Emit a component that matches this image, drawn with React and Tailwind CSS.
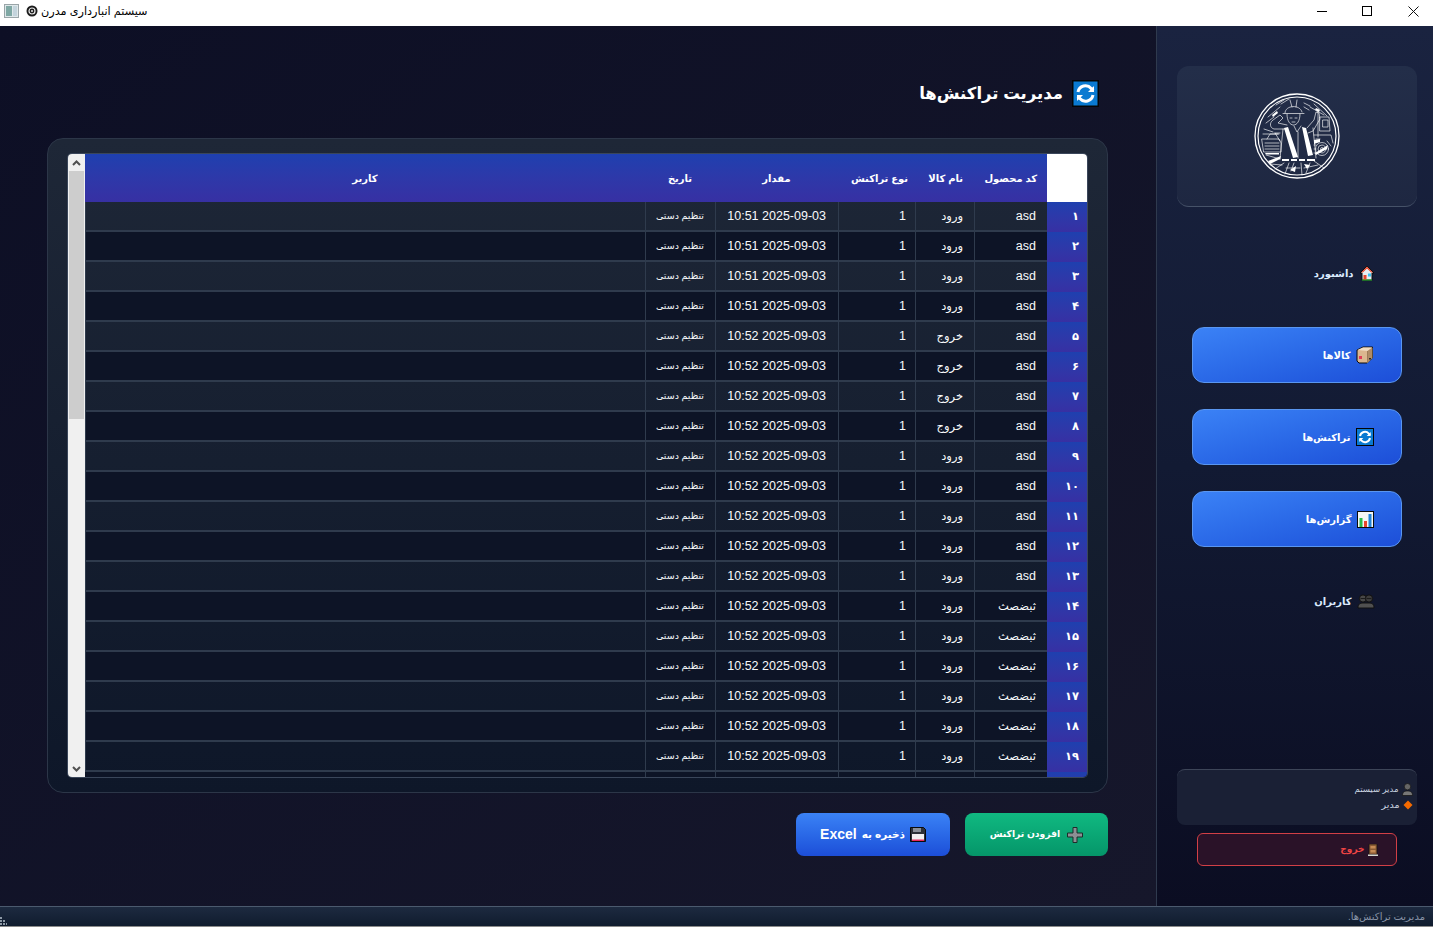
import React from "react";

const FONT = { fontFamily: '"Liberation Sans", "DejaVu Sans", sans-serif' };

function Refresh({ size = 18 }) {
  return (
    <svg width={size} height={size} viewBox="0 0 27 27" className="shrink-0">
      <rect x="0.75" y="0.75" width="25.5" height="25.5" fill="#0a7ad1" stroke="#050505" strokeWidth="1.5" />
      <path d="M6 12a7.6 7.6 0 0 1 13.2-3.6l2 2.1" fill="none" stroke="#fff" strokeWidth="3" />
      <path d="M22 6v6h-6z" fill="#fff" />
      <path d="M21 15a7.6 7.6 0 0 1-13.2 3.6l-2-2.1" fill="none" stroke="#fff" strokeWidth="3" />
      <path d="M5 21v-6h6z" fill="#fff" />
    </svg>
  );
}

function House() {
  return (
    <svg width="16" height="16" viewBox="0 0 16 16" className="shrink-0">
      <path d="M8 1 1 8h2v7h10V8h2z" fill="#e9eef2" stroke="#0a0a0a" />
      <path d="M8 1.6 2.2 7.5h1.6L8 3.6l4.2 3.9h1.6z" fill="#e8452c" />
      <rect x="4.5" y="10" width="3" height="5" fill="#e8452c" />
      <rect x="9" y="8.5" width="3" height="3" fill="#3fc4f2" />
      <rect x="3" y="14.5" width="10" height="1" fill="#2fc32f" />
    </svg>
  );
}

function Box() {
  return (
    <svg width="18" height="18" viewBox="0 0 18 18" className="shrink-0">
      <path d="M1 4 7 1h9.5v11L11 17H3l-2-2z" fill="#dcb78f" stroke="#0a0a0a" />
      <path d="M1.5 4 7 1.5h9L11.5 5z" fill="#efdcc4" />
      <path d="M11.5 5v12" stroke="#8c6c4a" />
      <path d="M11.5 17 16.5 12V1.500l-5 3.500z" fill="#b08c66" />
      <rect x="3" y="10" width="3" height="3" fill="#e33b58" />
      <rect x="13" y="12" width="2" height="1.500" fill="#2a2a2a" />
    </svg>
  );
}

function Chart() {
  return (
    <svg width="17" height="17" viewBox="0 0 17 17" className="shrink-0">
      <rect x="0.5" y="0.5" width="16" height="16" fill="#f4f6f4" stroke="#0a0a0a" />
      <rect x="2.5" y="7" width="3" height="9" fill="#29b84a" />
      <rect x="7" y="10" width="3" height="6" fill="#e8452c" />
      <rect x="11.5" y="3" width="3" height="13" fill="#1f82d8" />
    </svg>
  );
}

function Users() {
  return (
    <svg width="18" height="15" viewBox="0 0 18 15" className="shrink-0">
      <circle cx="6" cy="4.500" r="3.600" fill="#484848" stroke="#111" />
      <circle cx="12" cy="4.500" r="3.600" fill="#3c3c3c" stroke="#111" />
      <path d="M1 14c0-4 2-5 5-5h6c3 0 5 1 5 5z" fill="#505050" stroke="#111" />
      <path d="M3.500 4.500h5M9.500 4.500h5" stroke="#1c1c1c" />
    </svg>
  );
}

function Floppy() {
  return (
    <svg width="16" height="15" viewBox="0 0 16 15" className="shrink-0">
      <path d="M.5.5h13l2 2v12H.5z" fill="#2d3038" stroke="#0a0a0a" />
      <rect x="3" y="1" width="8" height="4" fill="#8a8f98" />
      <rect x="2" y="7" width="12" height="7" fill="#f3f0f2" />
      <rect x="2" y="12.500" width="12" height="1.500" fill="#e6285c" />
    </svg>
  );
}

function Plus() {
  return (
    <svg width="16" height="16" viewBox="0 0 16 16" className="shrink-0">
      <path d="M6 .5h4v5.500h5.500v4H10v5.500H6V10H.5V6H6z" fill="#8b9094" stroke="#1f2c2a" />
    </svg>
  );
}

function Door() {
  return (
    <svg width="10" height="12" viewBox="0 0 10 12" className="shrink-0">
      <rect x="1" y="0" width="8" height="10.500" fill="#8a5a34" stroke="#111" strokeWidth="0.7" />
      <rect x="2.500" y="2" width="5" height="2.500" fill="#c58a55" />
      <rect x="2.500" y="6" width="5" height="2.500" fill="#c58a55" />
      <rect x="0" y="10.500" width="10" height="1.500" fill="#d8d8d0" />
    </svg>
  );
}

function Person() {
  return (
    <svg width="11" height="13" viewBox="0 0 11 13" className="shrink-0">
      <circle cx="5.500" cy="3.700" r="3.200" fill="#666" stroke="#111" strokeWidth="0.7" />
      <path d="M.5 12.500c0-3.500 2-4.500 5-4.500s5 1 5 4.500z" fill="#777" stroke="#111" strokeWidth="0.7" />
    </svg>
  );
}

function Diamond() {
  return (
    <svg width="10" height="10" viewBox="0 0 10 10" className="shrink-0">
      <path d="M5 .5 9.500 5 5 9.500.5 5z" fill="#f56a00" />
    </svg>
  );
}

function Logo() {
  return (
    <svg width="86" height="86" viewBox="0 0 86 86" fill="none" stroke="#fff" strokeLinecap="round">
      <circle cx="43" cy="43" r="42" strokeWidth="1.300" />
      <circle cx="43" cy="43" r="39" strokeWidth="1.200" />
      <g strokeWidth="0.650">
        {/* hat and face */}
        <path d="M31 20c0-8 15-9 17-1M29 20.500h21M33 21c0 7 3 11 6.500 11s6.500-4 6.500-11M36 7l2 7M43 7l-1 7" />
        <path d="M36 25h2M41 25h2M38 29h3" />
        {/* raised arm and box */}
        <path d="M31 36 20 36c-4-1-5-6-1-9l7-5 3 3-5 5 9 2M14 24 26 14M12 30l8-6M22 12l8-5M27 11l8-5M10 36l9 3M9 41h16" />
        {/* torso */}
        <path d="M29 36l-3 30M59 35l3 30M40 33l3 6 4-6M44 39v26M26 40h-5M21 40l5 8" />
        {/* right: arm, pallets */}
        <path d="M53 35l7-8 2-8 3 1 1 6-7 12-5 2M56 14l14 8M60 11l13 12M50 10l6 3M50 14l5 3" />
        {/* forklift */}
        <path d="M66 24h9l1 14H66zM69 27h5v7h-5zM64 16v28M60 42h17l2 8M62 46h4" />
        <circle cx="68" cy="56" r="6.500" />
        <circle cx="68" cy="56" r="4" />
        <circle cx="68" cy="56" r="1.500" />
        <path d="M73 48l4 5M60 52h2M60 56h2M60 60h3" />
        {/* left machinery */}
        <path d="M8 46h17l2 4v9H10zM11 50h14M11 53h14M11 56h14M13 46l3-5h8" />
        {/* legs and ground */}
        <path d="M35 70l-4 11M47 70l1 12M56 70l-4 10M30 70l-9 6M60 68l10 7M32 75h14M50 75l14-3M12 62l14 4M28 72 16 71M40 70l-3 8" />
      </g>
      <g fill="#fff" stroke="none">
        <path d="M30 35l4-1 10 30-5 1zM48 34l4 1 7 27-5 1z" />
        <path d="M28 66h7v2h-7zM37 66h6v2h-6zM45 66h6v2h-6zM53 66h8v2h-8z" />
        <path d="M14 68l13-5-1 3-10 5zM61 60l13-8-1 4-11 6zM36 77l6-4-1 6zM50 71l6 1-3 4z" />
        <path d="M60 47l6-1v3l-6 2z" />
        <path d="M11 60h14v1.500H12zM18 22l5-4 1 2-5 4zM62 15l4 2-1 2-4-2z" />
      </g>
    </svg>
  );
}

function NavButton({ icon, label, active, extra = "" }) {
  return (
    <div
      className={
        "flex h-[56px] w-[210px] items-center justify-start gap-[5px] rounded-xl pr-[27px] text-[10px] font-bold " +
        extra +
        (active
          ? " border border-[#5a96f0] bg-gradient-to-br from-[#3b82f6] to-[#1d4ed8] text-white"
          : " text-[#dbeafe]")
      }
    >
      {icon}
      <span>{label}</span>
    </div>
  );
}

const COLS = "grid grid-cols-[40px_73px_59px_77px_123px_70px_560px]";

const rows = [
  ["۱", "asd", "ورود", "10:51"],
  ["۲", "asd", "ورود", "10:51"],
  ["۳", "asd", "ورود", "10:51"],
  ["۴", "asd", "ورود", "10:51"],
  ["۵", "asd", "خروج", "10:52"],
  ["۶", "asd", "خروج", "10:52"],
  ["۷", "asd", "خروج", "10:52"],
  ["۸", "asd", "خروج", "10:52"],
  ["۹", "asd", "ورود", "10:52"],
  ["۱۰", "asd", "ورود", "10:52"],
  ["۱۱", "asd", "ورود", "10:52"],
  ["۱۲", "asd", "ورود", "10:52"],
  ["۱۳", "asd", "ورود", "10:52"],
  ["۱۴", "ثبضصث", "ورود", "10:52"],
  ["۱۵", "ثبضصث", "ورود", "10:52"],
  ["۱۶", "ثبضصث", "ورود", "10:52"],
  ["۱۷", "ثبضصث", "ورود", "10:52"],
  ["۱۸", "ثبضصث", "ورود", "10:52"],
  ["۱۹", "ثبضصث", "ورود", "10:52"],
];

function Row({ r, i }) {
  const cell = "flex items-center border-l border-b-2 border-[#2f3b4d] pt-px text-[#f8fafc]";
  return (
    <div className={COLS + " h-[30px] shrink-0 " + (i % 2 === 1 ? "bg-[#0d1426]" : "")}>
      <div className="flex items-center justify-start bg-gradient-to-b from-[#1e40af] to-[#3730a3] pr-[8px] text-[11.5px] font-bold tracking-[1px] text-white">
        {r[0]}
      </div>
      <div className={cell + " pr-[11px] " + (r[1] === "asd" ? "text-[12.5px]" : "text-[11.5px]")}>{r[1]}</div>
      <div className={cell + " pr-[11px] text-[11.5px]"}>{r[2]}</div>
      <div className={cell + " pr-[9px] text-[12.5px]"}>1</div>
      <div className={cell + " pr-[12px] text-[12.5px]"}>{"2025-09-03 " + r[3]}</div>
      <div className={cell + " pr-[11px] text-[9.5px]"}>تنظیم دستی</div>
      <div className={cell}></div>
    </div>
  );
}

function PartialRow() {
  const cell = "border-l border-[#2f3b4d]";
  return (
    <div className={COLS + " h-[30px] shrink-0 bg-[#0d1426]"}>
      <div className="bg-gradient-to-b from-[#1e40af] to-[#3730a3]"></div>
      <div className={cell}></div>
      <div className={cell}></div>
      <div className={cell}></div>
      <div className={cell}></div>
      <div className={cell}></div>
      <div></div>
    </div>
  );
}

function Scrollbar() {
  return (
    <div className="flex h-full w-[17px] shrink-0 flex-col items-center bg-[#f0f0f0]">
      <div className="flex h-[17px] w-full items-center justify-center">
        <svg width="9" height="6" viewBox="0 0 9 6">
          <path d="M1 5 4.500 1.500 8 5" fill="none" stroke="#505050" strokeWidth="2" />
        </svg>
      </div>
      <div className="h-[248px] w-[15px] bg-[#cdcdcd]"></div>
      <div className="flex-1"></div>
      <div className="flex h-[17px] w-full items-center justify-center">
        <svg width="9" height="6" viewBox="0 0 9 6">
          <path d="M1 1 4.500 4.500 8 1" fill="none" stroke="#505050" strokeWidth="2" />
        </svg>
      </div>
    </div>
  );
}

export default function App() {
  return (
    <div className="flex h-[927px] w-[1433px] flex-col overflow-hidden bg-[#0f0f23]" style={FONT}>
      {/* window title bar */}
      <div className="flex h-[26px] shrink-0 items-center bg-white pb-[4px]">
        <div className="ml-[4px] flex h-[14px] w-[15px] items-center gap-px border border-[#9aa5a8] bg-[#dfe8ea] p-px">
          <div className="h-full w-[6px] bg-[#7fa8a4]"></div>
          <div className="h-full flex-1 bg-[#c4d4dc]"></div>
        </div>
        <svg width="12" height="12" viewBox="0 0 12 12" className="ml-[7px]">
          <circle cx="6" cy="6" r="5.500" fill="#1c1c1c" />
          <circle cx="6" cy="6" r="3" fill="none" stroke="#e8e8e8" strokeWidth="1.200" />
          <circle cx="6" cy="6" r="1" fill="#e8e8e8" />
        </svg>
        <span dir="rtl" className="ml-[3px] text-[11.25px] text-black">سیستم انبارداری مدرن</span>
        <div className="ml-auto flex items-center">
          <div className="flex w-[45px] justify-center pl-[2px]">
            <div className="h-px w-[10px] bg-black"></div>
          </div>
          <div className="flex w-[45px] justify-center pl-[2px]">
            <div className="h-[10px] w-[10px] border border-black"></div>
          </div>
          <div className="flex w-[45px] justify-center pl-[5px]">
            <svg width="11" height="11" viewBox="0 0 11 11">
              <path d="M.5.5l10 10M10.500.5l-10 10" stroke="#111" strokeWidth="1" />
            </svg>
          </div>
        </div>
      </div>

      <div className="flex min-h-0 flex-1">
        {/* main area */}
        <main dir="rtl" className="flex w-[1156px] flex-col bg-gradient-to-br from-[#0d0f25] to-[#16172b] pl-[47px] pr-[48px] pt-[54px]">
          <div className="flex h-[27px] items-center gap-[9px] pr-[9px]">
            <Refresh size={27} />
            <h1 className="text-[16.500px] font-bold text-white">مدیریت تراکنش‌ها</h1>
          </div>

          <div className="mt-[31px] flex h-[655px] flex-col rounded-2xl border border-[#2c3648] bg-gradient-to-b from-[#1e2737] to-[#0e1729] px-[20px] py-[15px]">
            <div className="flex h-[623px] w-[1019px] overflow-hidden rounded-sm shadow-[0_0_0_1px_#3a465a]">
              <div className="flex w-[1002px] flex-col overflow-hidden">
                <div className={COLS + " h-[48px] shrink-0 text-[10px] font-bold text-white"}>
                  <div className="bg-white"></div>
                  <div className="flex items-center bg-gradient-to-b from-[#1e40af] to-[#3730a3] pr-[10px]">کد محصول</div>
                  <div className="flex items-center bg-gradient-to-b from-[#1e40af] to-[#3730a3] pr-[11px]">نام کالا</div>
                  <div className="flex items-center bg-gradient-to-b from-[#1e40af] to-[#3730a3] pr-[7px]">نوع تراکنش</div>
                  <div className="flex items-center justify-center bg-gradient-to-b from-[#1e40af] to-[#3730a3]">مقدار</div>
                  <div className="flex items-center justify-center bg-gradient-to-b from-[#1e40af] to-[#3730a3]">تاریخ</div>
                  <div className="flex items-center justify-center bg-gradient-to-b from-[#1e40af] to-[#3730a3]">کاربر</div>
                </div>
                {rows.map((r, i) => (
                  <Row key={i} r={r} i={i} />
                ))}
                <PartialRow />
              </div>
              <Scrollbar />
            </div>
          </div>

          <div className="mt-[20px] flex gap-[15px]">
            <div className="flex h-[43px] w-[143px] items-center justify-center gap-[7px] rounded-lg bg-gradient-to-b from-[#10b981] to-[#059669] text-[9.250px] font-bold text-white">
              <Plus />
              <span>افزودن تراکنش</span>
            </div>
            <div className="flex h-[43px] w-[154px] items-center justify-center gap-[5px] rounded-lg bg-gradient-to-b from-[#3b82f6] to-[#1d4ed8] font-bold text-white">
              <Floppy />
              <span className="text-[10.500px]">ذخیره به</span>
              <span className="text-[14px]">Excel</span>
            </div>
          </div>
        </main>

        {/* sidebar */}
        <aside dir="rtl" className="flex w-[277px] flex-col items-center bg-gradient-to-b from-[#1a2340] via-[#121a33] to-[#0b0d22] pl-[4px] shadow-[inset_1px_0_0_#2f3a4e]">
          <div className="mt-[40px] flex h-[141px] w-[240px] items-center justify-center rounded-xl border-b border-[#465268] bg-gradient-to-b from-[#232e49] to-[#1e2741]">
            <Logo />
          </div>
          <div className="mt-[38px] flex flex-col gap-[26px]">
            <NavButton icon={<House />} label="داشبورد" />
            <NavButton active icon={<Box />} label="کالاها" />
            <NavButton active icon={<Refresh />} label="تراکنش‌ها" />
            <NavButton active icon={<Chart />} label="گزارش‌ها" />
            <NavButton icon={<Users />} label="کاربران" />
          </div>
          <div className="mt-[140px] flex h-[56px] w-[240px] flex-col justify-center gap-[2px] rounded-lg border-t border-[#3d4558] bg-[#1a2035] pr-[4px] text-[#cbd5e1]">
            <div className="flex items-center gap-[3px]">
              <Person />
              <span className="text-[8.500px]">مدیر سیستم</span>
            </div>
            <div className="flex items-center gap-[3px]">
              <Diamond />
              <span className="text-[9.500px]">مدیر</span>
            </div>
          </div>
          <div className="mt-[8px] flex h-[33px] w-[200px] items-center gap-[3px] rounded-md border border-[#d23f46] bg-[#2a1228] pr-[18px] text-[9px] font-bold text-[#ef4444]">
            <Door />
            <span>خروج</span>
          </div>
        </aside>
      </div>

      {/* status bar */}
      <div dir="rtl" className="relative flex h-[21px] shrink-0 items-center border-t border-b border-t-[#4b5a6e] border-b-[#8a8a8a] bg-gradient-to-b from-[#1d2a40] to-[#101c2e] pr-[8px] text-[10px] text-[#8793a6]">
        <span>مدیریت تراکنش‌ها.</span>
        <svg width="7" height="9" viewBox="0 0 7 9" className="absolute bottom-[1px] left-0">
          <path d="M0 1h2v2H0zM0 4h2v2H0zM0 7h2v2H0zM3 4h2v2H3zM3 7h2v2H3zM6 7h1v2H6z" fill="#8d99a6" />
        </svg>
      </div>
    </div>
  );
}
